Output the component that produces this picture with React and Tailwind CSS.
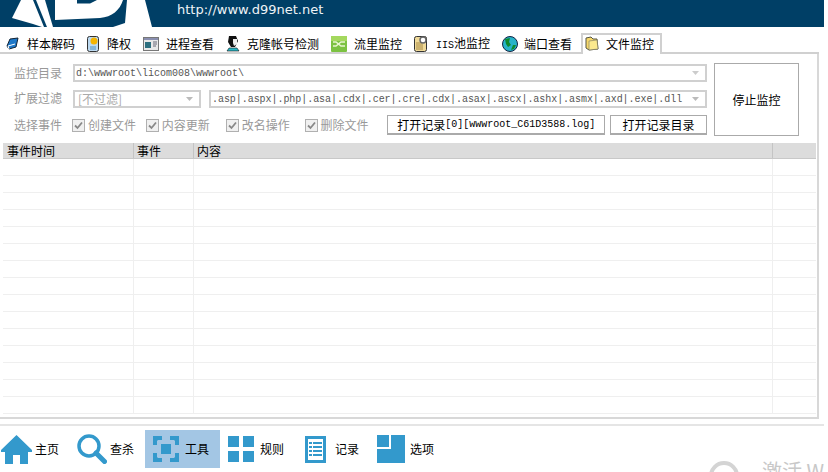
import React from "react";

const cjk = { fontFamily: '"Noto Sans CJK SC", sans-serif' };
const mono = '"Liberation Mono", "Noto Sans CJK SC", monospace';

const tabs = [
  { label: "样本解码", icon: "book", iconW: 21 },
  { label: "降权", icon: "doc", iconW: 20 },
  { label: "进程查看", icon: "win", iconW: 23 },
  { label: "克隆帐号检测", icon: "user", iconW: 21 },
  { label: "流里监控", icon: "flow", iconW: 23 },
  { label: "IIS池监控", icon: "gear", iconW: 22 },
  { label: "端口查看", icon: "globe", iconW: 22 },
];

function TabIcon({ name }) {
  if (name === "book")
    return (
      <svg width="14" height="14" viewBox="0 0 14 14">
        <path d="M4 2 L12 1 L10 10 L3 12 L1 9 Z" fill="#1e78c8" stroke="#123" strokeWidth="1" />
        <path d="M3 12 L2 9 L9 7" stroke="#fff" fill="none" />
      </svg>
    );
  if (name === "doc")
    return (
      <svg width="13" height="16" viewBox="0 0 13 16">
        <rect x="0.5" y="0.5" width="11" height="15" rx="2" fill="#bcd9f0" stroke="#333" />
        <circle cx="7" cy="5" r="3.5" fill="#f4b400" />
        <path d="M3 11 H9 M3 13 H9" stroke="#4a90c0" />
      </svg>
    );
  if (name === "win")
    return (
      <svg width="16" height="14" viewBox="0 0 16 14">
        <rect x="0.5" y="0.5" width="15" height="13" fill="#e8e8e8" stroke="#777" />
        <rect x="1" y="1" width="14" height="2" fill="#8a8fb0" />
        <rect x="2" y="5" width="6" height="6" fill="#2d6f7f" />
        <path d="M10 5 H14 M10 7 H14 M10 9 H13" stroke="#667" />
      </svg>
    );
  if (name === "user")
    return (
      <svg width="14" height="17" viewBox="0 0 14 17">
        <path d="M3 1 H10 L12 6 L9 12 H5 L2 7 Z" fill="#111" />
        <path d="M7 4 H11 L11 9 L8 11 L7 8 Z" fill="#eee" />
        <path d="M1 16 L3 13 H11 L13 16 Z" fill="#26b8c8" stroke="#111" strokeWidth="0.6" />
      </svg>
    );
  if (name === "flow")
    return (
      <svg width="16" height="16" viewBox="0 0 16 16">
        <rect x="0" y="0" width="16" height="16" rx="1" fill="#7cc242" />
        <rect x="0" y="0" width="16" height="5" fill="#a4d85e" />
        <path d="M2 6 H5 L10 10 H14 M2 10 H5 L10 6 H14" stroke="#e8f5d0" strokeWidth="1.4" fill="none" />
      </svg>
    );
  if (name === "gear")
    return (
      <svg width="14" height="16" viewBox="0 0 14 16">
        <rect x="0.5" y="0.5" width="12" height="15" rx="2" fill="#efd998" stroke="#333" />
        <path d="M2 7 H8 M2 9 H9 M2 11 H9 M2 13 H9" stroke="#a88a44" />
        <circle cx="9" cy="4" r="3" fill="#fff" stroke="#666" strokeWidth="1.4" />
      </svg>
    );
  if (name === "globe")
    return (
      <svg width="16" height="16" viewBox="0 0 16 16">
        <circle cx="8" cy="8" r="7.5" fill="#27b3c9" stroke="#124" />
        <path d="M3 3 L8 2 L7 6 L9 9 L6 11 L4 8 Z M11 9 L14 9 L12 13 L9 14 Z" fill="#0e8a2e" />
      </svg>
    );
  return (
    <svg width="14" height="15" viewBox="0 0 14 15">
      <path d="M1 2 L6 1 L8 3 L12 3 L13 13 L4 14 L1 12 Z" fill="#f6d86a" stroke="#554" />
      <path d="M4 5 L12 4 L13 13 L4 14 Z" fill="#fbe98e" stroke="#776" strokeWidth="0.6" />
    </svg>
  );
}

function Combo({ className, text, arrow = "#bbb", textClass = "" }) {
  return (
    <div className={`h-[18px] border-2 border-[#d0d0d0] bg-white flex items-center justify-between pl-[1px] pr-[6px] ${className}`}>
      <span className={`text-[10px] text-[#555] whitespace-nowrap ${textClass}`} style={{ fontFamily: mono }}>
        {text}
      </span>
      <svg width="7" height="4" viewBox="0 0 7 4" className="shrink-0">
        <path d="M0 0 H7 L3.5 4 Z" fill={arrow} />
      </svg>
    </div>
  );
}

function Check({ label, className }) {
  return (
    <div className={`flex items-center gap-[3px] ${className}`}>
      <div className="w-[13px] h-[13px] border border-[#b0b0b0] bg-[#f0f0f0] flex items-center justify-center">
        <svg width="9" height="9" viewBox="0 0 9 9">
          <path d="M1 4.5 L3.5 7 L8 1.5" stroke="#888" strokeWidth="1.8" fill="none" />
        </svg>
      </div>
      <span className="text-[12px] text-[#999] leading-none">{label}</span>
    </div>
  );
}

function Home() {
  return (
    <svg width="31" height="29" viewBox="0 0 31 29">
      <path d="M15.5 0 L31 15 V17 H27 V29 H19 V20 H12 V29 H4 V17 H0 V15 Z" fill="#3399cc" />
    </svg>
  );
}
function Search() {
  return (
    <svg width="30" height="30" viewBox="0 0 30 30">
      <circle cx="12" cy="12" r="10" fill="none" stroke="#3399cc" strokeWidth="3.5" />
      <path d="M19 19 L27.5 27.5" stroke="#3399cc" strokeWidth="5" strokeLinecap="round" />
    </svg>
  );
}
function Tools() {
  return (
    <svg width="26" height="26" viewBox="0 0 26 26">
      <rect x="8" y="8" width="10" height="10" fill="#3399cc" />
      <path d="M0 0 H9 V4 H5 L4 5 V9 H0 Z M17 0 H26 V9 H22 V5 L21 4 H17 Z M0 17 H4 V21 L5 22 H9 V26 H0 Z M22 17 H26 V26 H17 V22 H21 L22 21 Z" fill="#3399cc" />
    </svg>
  );
}
function Rules() {
  return (
    <svg width="26" height="26" viewBox="0 0 26 26">
      <path d="M0 0 H11 V11 H0 Z M15 0 H26 V11 H15 Z M0 15 H11 V26 H0 Z M15 15 H26 V26 H15 Z" fill="#3399cc" />
    </svg>
  );
}
function Records() {
  return (
    <svg width="21" height="27" viewBox="0 0 21 27">
      <rect x="0" y="0" width="21" height="27" fill="#3399cc" />
      <rect x="3" y="3" width="15" height="21" fill="#fff" />
      <path d="M4 6 H7 V8 H4 Z M8 6 H17 V8 H8 Z M4 10 H7 V12 H4 Z M8 10 H17 V12 H8 Z M4 14 H7 V16 H4 Z M8 14 H17 V16 H8 Z M4 18 H7 V20 H4 Z M8 18 H17 V20 H8 Z" fill="#3399cc" />
    </svg>
  );
}
function Options() {
  return (
    <svg width="28" height="28" viewBox="0 0 28 28">
      <path d="M0 0 H12 V12 H0 Z M14 0 H28 V28 H0 V14 H14 Z" fill="#3399cc" />
    </svg>
  );
}

const navItems = [
  { label: "主页", Icon: Home, w: 75, iconW: 34, pl: 1 },
  { label: "查杀", Icon: Search, w: 70, iconW: 33, pl: 2 },
  { label: "工具", Icon: Tools, w: 75, iconW: 32, pl: 8, active: true },
  { label: "规则", Icon: Rules, w: 75, iconW: 32, pl: 8 },
  { label: "记录", Icon: Records, w: 82, iconW: 30, pl: 10 },
  { label: "选项", Icon: Options, w: 60, iconW: 33, pl: 0 },
];

const rows = Array.from({ length: 15 });

export default function App() {
  return (
    <div className="relative w-[828px] h-[472px] overflow-hidden bg-white text-black" style={cjk}>
      <div className="w-[824px] h-[27px] bg-[#003f66] flex overflow-hidden">
        <svg width="177" height="27" viewBox="0 0 177 27" className="shrink-0">
          <path d="M12 18 L21 0 H33 L44 27 H42 L33 24 Z" fill="#fff" />
          <path d="M36 0 H45 L53 27 H47 Z" fill="#fff" />
          <path d="M55 0 H77 V3.5 H90 L97 0 H123 C120 10 112 17 100 18 L55 20 Z" fill="#fff" />
          <path d="M127 0 H145 L152 27 H113 L125 23 Z" fill="#fff" />
        </svg>
        <span className="text-[13px] leading-[20px] text-[#eef3f6]" style={{ fontFamily: '"DejaVu Sans", sans-serif' }}>
          http://www.d99net.net
        </span>
      </div>

      <div className="h-[27px] w-[819px] flex items-end border-b-2 border-[#d0d0d0]">
        <div className="flex items-center h-[25px] w-[581px] pl-[6px] pt-[8px]">
          {tabs.map((t) => (
            <div key={t.label} className="flex items-center h-full pr-[12px]">
              <div className="flex items-center" style={{ width: t.iconW }}>
                <TabIcon name={t.icon} />
              </div>
              <span className="text-[12px] whitespace-nowrap leading-none">
                {t.label === "IIS池监控" ? (
                  <>
                    <span className="text-[10px]" style={{ fontFamily: mono }}>IIS</span>池监控
                  </>
                ) : (
                  t.label
                )}
              </span>
            </div>
          ))}
        </div>
        <div className="w-[81px] h-[21px] -mb-[2px] pb-[2px] border-2 border-b-0 border-[#d0d0d0] bg-white flex items-center pl-[2px] gap-[7px] relative">
          <TabIcon name="folder" />
          <span className="text-[12px] leading-none whitespace-nowrap">文件监控</span>
        </div>
      </div>

      <div className="w-[819px] h-[365px] border-r-2 border-b-2 border-[#d8d8d8] pl-[3px] pr-[1px]">
        <div className="flex pl-[11px] pt-[9px] h-[89px]">
          <div className="w-[693px] flex flex-col">
            <div className="flex items-center h-[18px] mt-[1px]">
              <span className="w-[59px] text-[12px] text-[#999] leading-none -mt-[1px]">监控目录</span>
              <Combo className="flex-1" text="d:\wwwroot\licom008\wwwroot\" arrow="#ccc" />
            </div>
            <div className="flex items-center h-[18px] mt-[8px]">
              <span className="w-[59px] text-[12px] text-[#999] leading-none -mt-[3px]">扩展过滤</span>
              <div className="w-[128px] h-[18px] border-2 border-[#d0d0d0] flex items-center justify-between pl-[3px] pr-[6px]">
                <span className="text-[12px] text-[#aaa] leading-none">[不过滤]</span>
                <svg width="7" height="4" viewBox="0 0 7 4">
                  <path d="M0 0 H7 L3.5 4 Z" fill="#bbb" />
                </svg>
              </div>
              <Combo className="flex-1 ml-[8px]" textClass="tracking-[-0.05px]" text=".asp|.aspx|.php|.asa|.cdx|.cer|.cre|.cdx|.asax|.ascx|.ashx|.asmx|.axd|.exe|.dll" />
            </div>
            <div className="flex items-center h-[20px] mt-[7px]">
              <span className="w-[58px] text-[12px] text-[#999] leading-none">选择事件</span>
              <Check label="创建文件" className="w-[74px]" />
              <Check label="内容更新" className="w-[80px]" />
              <Check label="改名操作" className="w-[79px]" />
              <Check label="删除文件" className="w-[83px]" />
              <button className="w-[218px] h-[20px] border border-[#aaa] border-b-2 bg-white flex items-center justify-center text-[12px] leading-none whitespace-nowrap">
                打开记录<span className="text-[10px]" style={{ fontFamily: mono }}>[0][wwwroot_C61D3588.log]</span>
              </button>
              <button className="w-[97px] h-[20px] ml-[5px] shrink-0 border border-[#aaa] border-b-2 bg-white text-[12px] leading-none whitespace-nowrap">
                打开记录目录
              </button>
            </div>
          </div>
          <button className="w-[85px] h-[73px] ml-[7px] border border-[#aaa] bg-white text-[12px] leading-none">
            停止监控
          </button>
        </div>

        <div className="w-[813px]">
          <div className="flex h-[16px] bg-[#dcdcdc] border-b border-[#c8c8c8] text-[12px] leading-[15px]">
            <div className="w-[131px] pl-[4px] border-r border-[#c4c4c4]">事件时间</div>
            <div className="w-[60px] pl-[3px] border-r border-[#c4c4c4]">事件</div>
            <div className="w-[579px] pl-[3px] border-r border-[#c4c4c4]">内容</div>
            <div className="flex-1" />
          </div>
          {rows.map((_, i) => (
            <div key={i} className="flex h-[17px] border-b border-[#efefef]">
              <div className="w-[131px] border-r border-[#efefef]" />
              <div className="w-[60px] border-r border-[#efefef]" />
              <div className="w-[579px] border-r border-[#efefef]" />
            </div>
          ))}
        </div>
      </div>

      <div className="w-[824px] h-[7px] border-b-2 border-[#e5e5e5]" />

      <div className="flex items-center h-[38px] mt-[4px]">
        {navItems.map(({ label, Icon, w, iconW, pl, active }) => (
          <div key={label} className={`flex items-center h-full ${active ? "bg-[#a3c6e4]" : ""}`} style={{ width: w, paddingLeft: pl }}>
            <div style={{ width: iconW }} className="flex items-center shrink-0">
              <Icon />
            </div>
            <span className="text-[12px] leading-none">{label}</span>
          </div>
        ))}
      </div>

      <div className="absolute left-[709px] top-[461px] flex items-start text-[#d0d0d0]">
        <div className="w-[30px] h-[30px] rounded-full border-[4px] border-[#d4d4d4]" />
        <span className="ml-[23px] text-[20px] leading-none text-[#c8c8c8]">激活 W</span>
      </div>
    </div>
  );
}
